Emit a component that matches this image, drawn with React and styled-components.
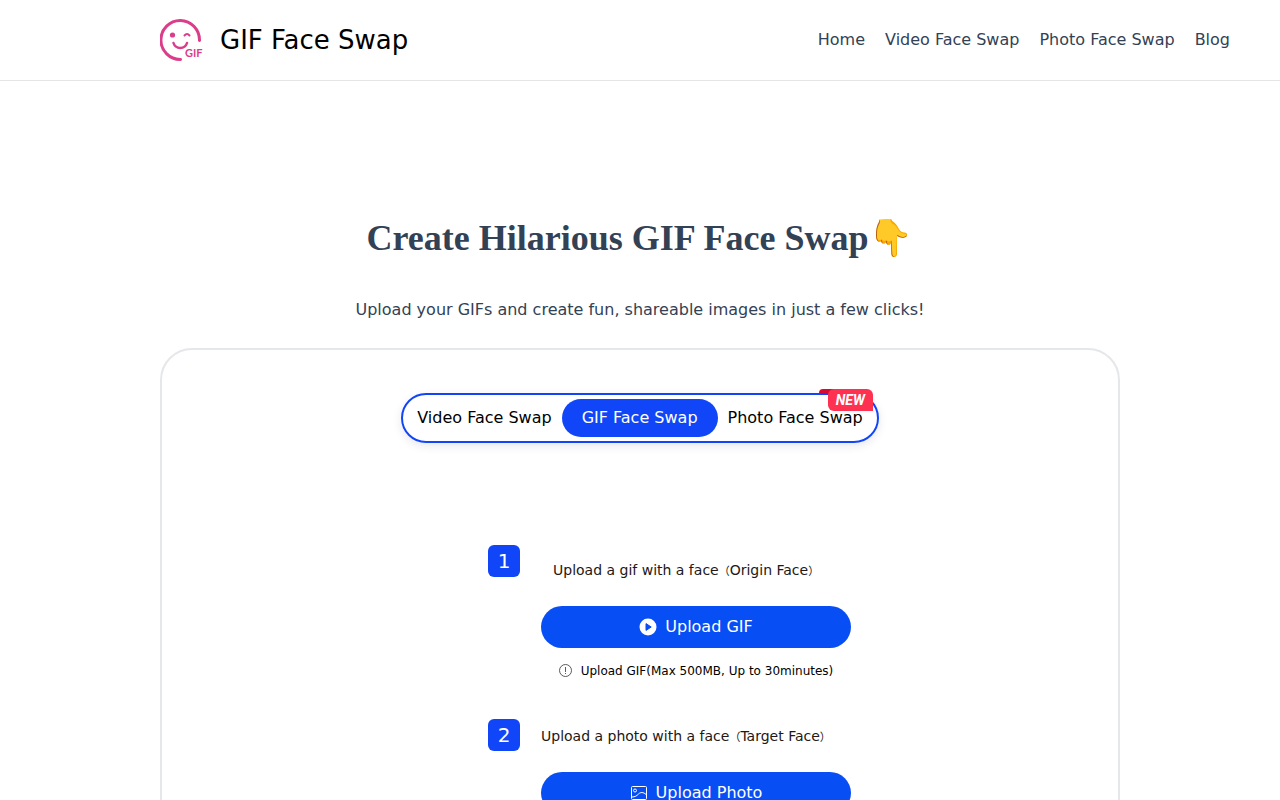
import React from "react"
import styled, { createGlobalStyle } from "styled-components"

const GlobalStyle = createGlobalStyle`
	* {
		box-sizing: border-box;
	}
	body {
		margin: 0;
		background-color: #fff;
		color: #334155;
		font-family: "DejaVu Sans", "Noto Sans CJK SC", sans-serif;
		font-size: 16px;
		line-height: 24px;
	}
	button {
		font: inherit;
		border: 0;
		cursor: pointer;
	}
	svg {
		display: block;
		flex-shrink: 0;
	}
`
const Header = styled.header`
	display: flex;
	align-items: center;
	justify-content: space-between;
	min-height: 81px;
	padding: 0 50px 0 160px;
	border-bottom: 1px solid #e5e5e5;
`
const Brand = styled.a`
	display: flex;
	align-items: center;
	gap: 16px;
	color: #000;
	font-size: 26px;
	line-height: 32px;
	text-decoration: none;
`
const Nav = styled.nav`
	display: flex;
	gap: 20px;
`
const NavLink = styled.a`
	color: #334155;
	text-decoration: none;
`
const Main = styled.main`
	padding: 132px 160px 48px;
	text-align: center;
`
const Title = styled.h1`
	margin: 0;
	font-family: "Liberation Serif", serif;
	font-size: 36px;
	line-height: 50px;
`
const Subtitle = styled.p`
	margin: 35px 0 26px;
`
const Card = styled.section`
	display: flex;
	flex-direction: column;
	align-items: center;
	max-width: 960px;
	margin: 0 auto;
	padding: 43px 24px 64px;
	border: 2px solid #e5e7eb;
	border-radius: 32px;
`
const Tabs = styled.div`
	position: relative;
	display: flex;
	align-items: center;
	gap: 10px;
	height: 50px;
	padding: 0 14px;
	border: 2px solid #1046f7;
	border-radius: 25px;
	box-shadow: 0 3px 10px rgba(30, 30, 100, 0.1);
`
const Tab = styled.button`
	height: 38px;
	padding: ${props => (props.$active ? "0 20px" : "0")};
	border-radius: 19px;
	background-color: ${props => (props.$active ? "#1046f7" : "transparent")};
	color: ${props => (props.$active ? "#fff" : "#000")};
`
const Badge = styled.span`
	position: absolute;
	top: -6px;
	right: 4px;
	width: 45px;
	height: 22px;
	border-radius: 6px 6px 0 6px;
	background-color: #ff3150;
	color: #fff;
	font: italic 700 14px/23px Roboto, sans-serif;

	&::before {
		content: "";
		position: absolute;
		top: 0;
		left: -9px;
		z-index: -1;
		width: 16px;
		height: 4px;
		border-radius: 4px 0 0 0;
		background-color: #dc0c30;
	}
`
const Steps = styled.ol`
	display: grid;
	gap: 40px;
	margin: 102px 0 0;
	padding: 0 0 0 59px;
	list-style: none;
	text-align: left;
`
const StepRow = styled.li`
	display: flex;
	gap: 21px;
`
const StepNumber = styled.span`
	width: 32px;
	height: 32px;
	border-radius: 6px;
	background-color: #1046f7;
	color: #fff;
	font-size: 20px;
	line-height: 32px;
	text-align: center;
`
const StepBody = styled.div`
	width: 310px;
`
const StepLabel = styled.p`
	margin: 0;
	padding: ${props => (props.$inset ? "15px 12px 0" : "7px 0 0")};
	color: #231815;
	font-size: 14px;
	line-height: 20px;
	white-space: nowrap;
`
const Paren = styled.span`
	font-size: 11px;
	line-height: 16px;
`
const UploadButton = styled.button`
	display: flex;
	align-items: center;
	justify-content: center;
	gap: 8px;
	width: 100%;
	height: 42px;
	margin-top: 26px;
	border-radius: 21px;
	background-color: #084ef5;
	color: #fff;
`
const Hint = styled.p`
	display: flex;
	align-items: center;
	justify-content: center;
	gap: 8px;
	margin: 15px 0 0;
	color: #000;
	font-size: 12px;
	line-height: 16px;
`

const LogoIcon = () => (
	<svg width="44" height="44" viewBox="0 0 44 44" fill="none" stroke="#db3d8b" strokeWidth="3" strokeLinecap="round" aria-hidden="true">
		<path d="M39.5 22.5A19.300 19.500 0 1 0 20.5 41.5" />
		<circle cx="12.500" cy="17" r="2.600" fill="#db3d8b" stroke="none" />
		<path d="M24.500 17.500Q27 14.500 29.500 17.500" strokeWidth="2" />
		<path d="M13.500 25C15.500 31.500 25 31.500 27 25" strokeWidth="2.500" />
		<text x="25" y="39" fill="#db3d8b" stroke="none" fontFamily="Lato, sans-serif" fontSize="11" fontWeight="700">
			GIF
		</text>
	</svg>
)

const PlayIcon = () => (
	<svg width="18" height="18" viewBox="0 0 18 18" aria-hidden="true">
		<circle cx="9" cy="9" r="8.5" fill="#fff" />
		<path d="M7 5.6L12.200 9L7 12.400Z" fill="#084ef5" stroke="#084ef5" strokeLinejoin="round" />
	</svg>
)

const PhotoIcon = () => (
	<svg width="18" height="18" viewBox="0 0 18 18" fill="none" stroke="#fff" strokeLinejoin="round" aria-hidden="true">
		<rect x="1.500" y="2.500" width="15" height="13" rx="1" />
		<circle cx="5" cy="6.500" r="1.500" />
		<path d="M2 13C5 13 6.500 12 8.500 10C10.500 8 13.500 8 16 10.500" />
	</svg>
)

const InfoIcon = () => (
	<svg width="14" height="14" viewBox="0 0 14 14" fill="none" stroke="#333" strokeWidth="0.8" aria-hidden="true">
		<circle cx="6.500" cy="6.500" r="6" />
		<path d="M6.500 3V8M6.500 9V10" />
	</svg>
)

const links = ["Home", "Video Face Swap", "Photo Face Swap", "Blog"]

function Step({ number, label, face, inset, icon, action, hint }) {
	return (
		<StepRow>
			<StepNumber>{number}</StepNumber>
			<StepBody>
				<StepLabel $inset={inset}>
					{label}
					<Paren>（</Paren>
					{face}
					<Paren>）</Paren>
				</StepLabel>
				<UploadButton type="button">
					{icon}
					{action}
				</UploadButton>
				{hint && (
					<Hint>
						<InfoIcon />
						{hint}
					</Hint>
				)}
			</StepBody>
		</StepRow>
	)
}

function App() {
	return (
		<>
			<GlobalStyle />
			<Header>
				<Brand href="#">
					<LogoIcon />
					GIF Face Swap
				</Brand>
				<Nav>
					{links.map(link => (
						<NavLink key={link} href="#">
							{link}
						</NavLink>
					))}
				</Nav>
			</Header>
			<Main>
				<Title>Create Hilarious GIF Face Swap👇</Title>
				<Subtitle>Upload your GIFs and create fun, shareable images in just a few clicks!</Subtitle>
				<Card>
					<Tabs>
						<Tab type="button">Video Face Swap</Tab>
						<Tab type="button" $active>
							GIF Face Swap
						</Tab>
						<Tab type="button">Photo Face Swap</Tab>
						<Badge>NEW</Badge>
					</Tabs>
					<Steps>
						<Step
							number={1}
							label="Upload a gif with a face"
							face="Origin Face"
							inset
							icon={<PlayIcon />}
							action="Upload GIF"
							hint="Upload GIF(Max 500MB, Up to 30minutes)"
						/>
						<Step
							number={2}
							label="Upload a photo with a face"
							face="Target Face"
							icon={<PhotoIcon />}
							action="Upload Photo"
						/>
					</Steps>
				</Card>
			</Main>
		</>
	)
}

export default App
